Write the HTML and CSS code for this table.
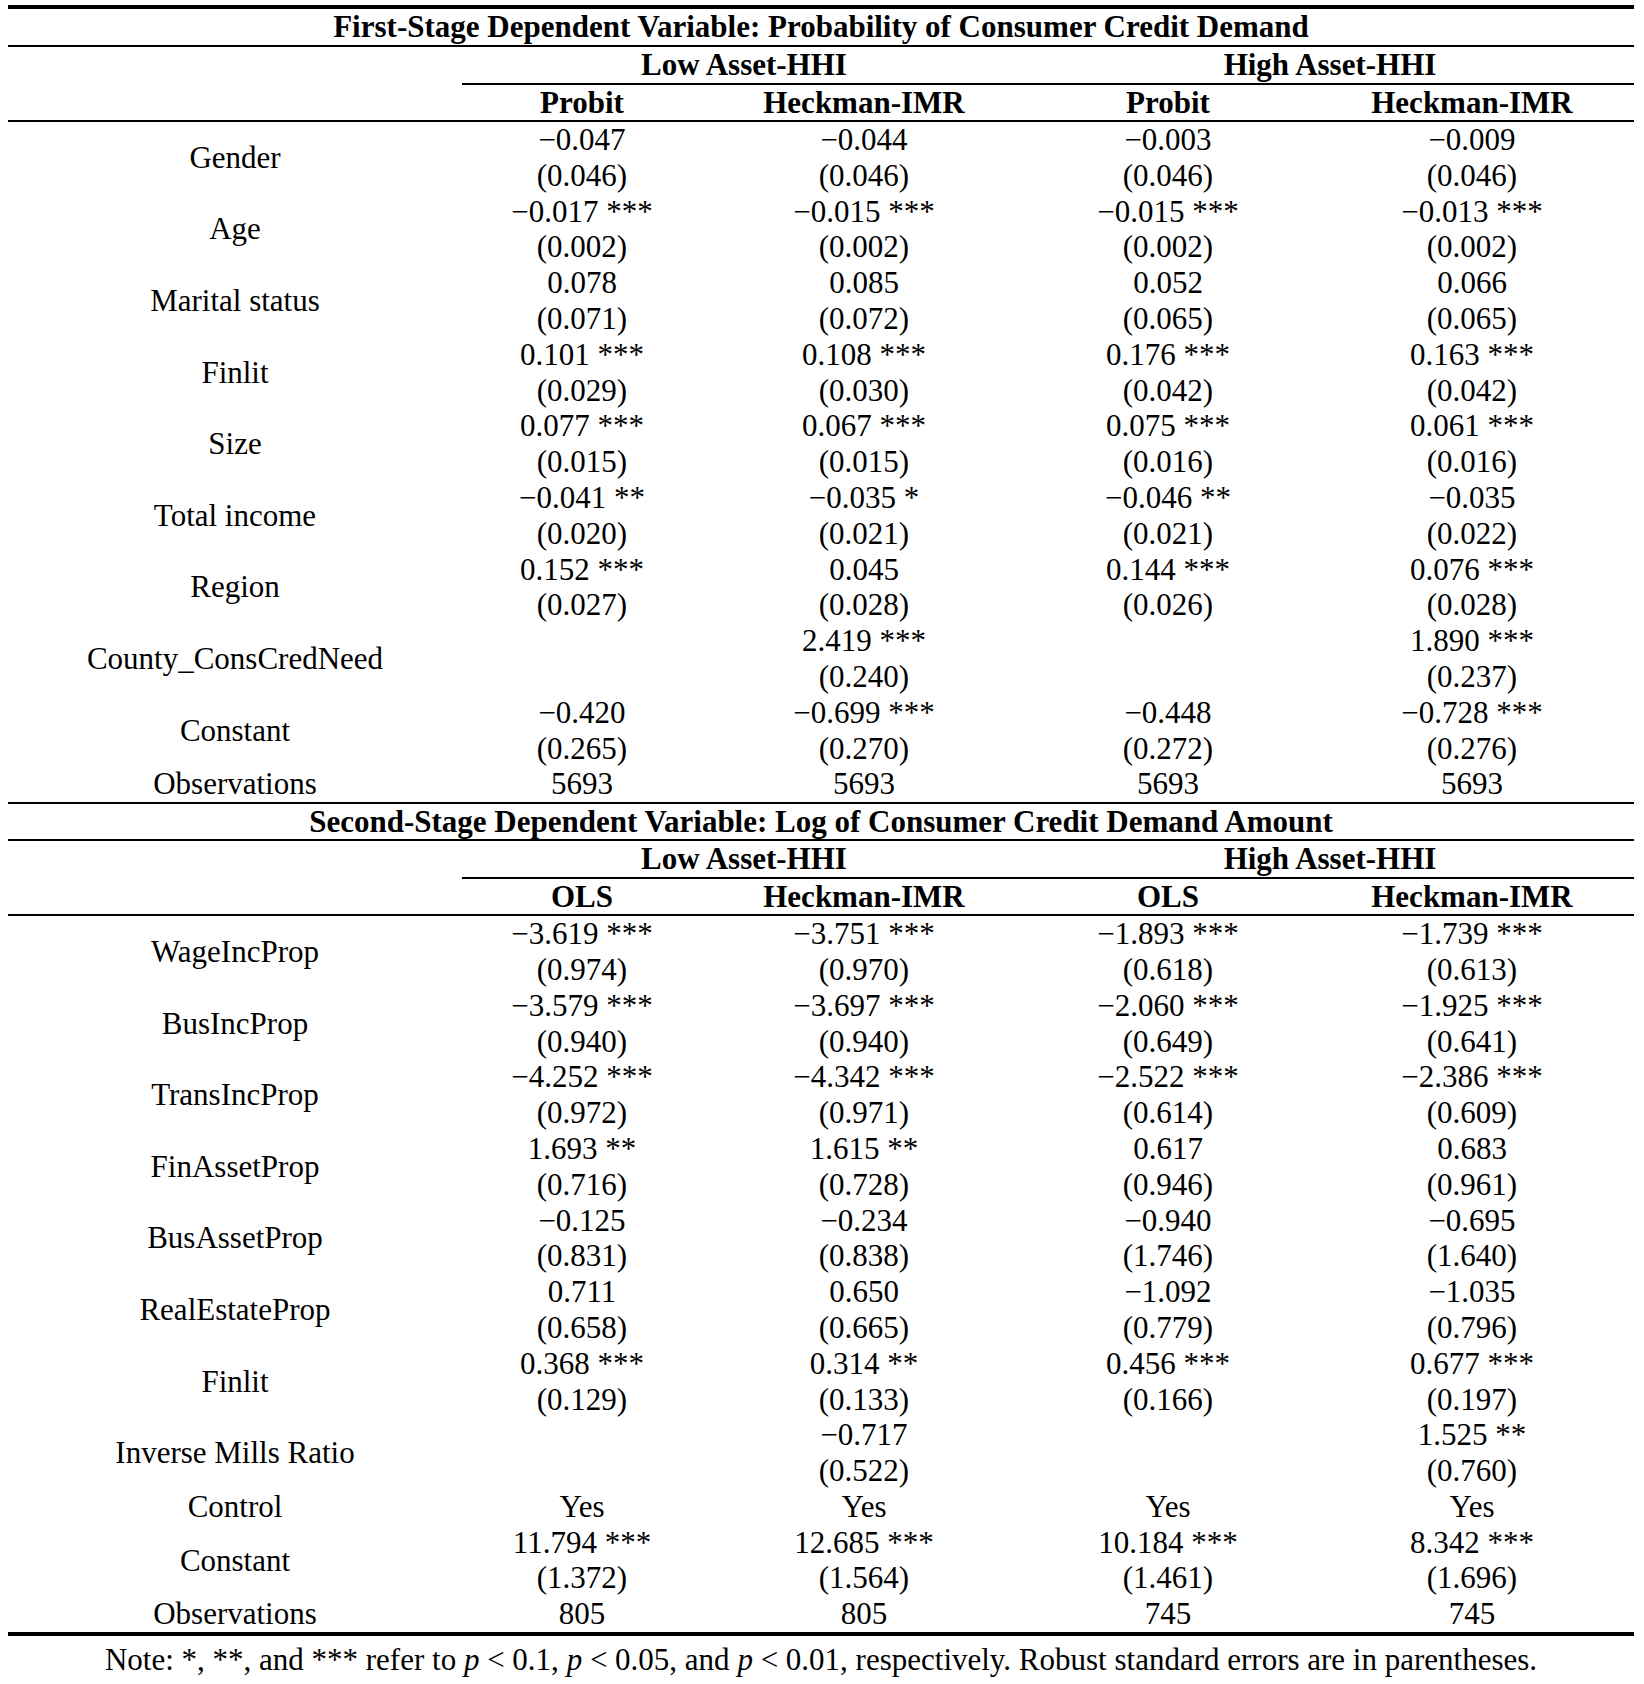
FILE: index.html
```html
<!DOCTYPE html>
<html lang="en">
<head>
<meta charset="utf-8">
<title>Heckman two-stage estimates</title>
<link rel="stylesheet" href="styles.css">
</head>
<body>
<div class="page">
  <div class="tbl">
    <div class="title">First-Stage Dependent Variable: Probability of Consumer Credit Demand</div>
    <div class="head">
      <div></div>
      <div class="groups">
        <div class="group">Low Asset-HHI</div>
        <div class="group">High Asset-HHI</div>
      </div>
    </div>
    <div class="grid sub">
      <div></div><div>Probit</div><div>Heckman-IMR</div><div>Probit</div><div>Heckman-IMR</div>
    </div>
    <div class="body body-1">
      <div class="grid row"><div class="label">Gender</div><div>−0.047<br>(0.046)</div><div>−0.044<br>(0.046)</div><div>−0.003<br>(0.046)</div><div>−0.009<br>(0.046)</div></div>
      <div class="grid row"><div class="label">Age</div><div>−0.017 ***<br>(0.002)</div><div>−0.015 ***<br>(0.002)</div><div>−0.015 ***<br>(0.002)</div><div>−0.013 ***<br>(0.002)</div></div>
      <div class="grid row"><div class="label">Marital status</div><div>0.078<br>(0.071)</div><div>0.085<br>(0.072)</div><div>0.052<br>(0.065)</div><div>0.066<br>(0.065)</div></div>
      <div class="grid row"><div class="label">Finlit</div><div>0.101 ***<br>(0.029)</div><div>0.108 ***<br>(0.030)</div><div>0.176 ***<br>(0.042)</div><div>0.163 ***<br>(0.042)</div></div>
      <div class="grid row"><div class="label">Size</div><div>0.077 ***<br>(0.015)</div><div>0.067 ***<br>(0.015)</div><div>0.075 ***<br>(0.016)</div><div>0.061 ***<br>(0.016)</div></div>
      <div class="grid row"><div class="label">Total income</div><div>−0.041 **<br>(0.020)</div><div>−0.035 *<br>(0.021)</div><div>−0.046 **<br>(0.021)</div><div>−0.035<br>(0.022)</div></div>
      <div class="grid row"><div class="label">Region</div><div>0.152 ***<br>(0.027)</div><div>0.045<br>(0.028)</div><div>0.144 ***<br>(0.026)</div><div>0.076 ***<br>(0.028)</div></div>
      <div class="grid row two"><div class="label">County_ConsCredNeed</div><div></div><div>2.419 ***<br>(0.240)</div><div></div><div>1.890 ***<br>(0.237)</div></div>
      <div class="grid row"><div class="label">Constant</div><div>−0.420<br>(0.265)</div><div>−0.699 ***<br>(0.270)</div><div>−0.448<br>(0.272)</div><div>−0.728 ***<br>(0.276)</div></div>
      <div class="grid row"><div class="label">Observations</div><div>5693</div><div>5693</div><div>5693</div><div>5693</div></div>
    </div>

    <div class="title title-2">Second-Stage Dependent Variable: Log of Consumer Credit Demand Amount</div>
    <div class="head">
      <div></div>
      <div class="groups">
        <div class="group">Low Asset-HHI</div>
        <div class="group">High Asset-HHI</div>
      </div>
    </div>
    <div class="grid sub">
      <div></div><div>OLS</div><div>Heckman-IMR</div><div>OLS</div><div>Heckman-IMR</div>
    </div>
    <div class="body body-2">
      <div class="grid row"><div class="label">WageIncProp</div><div>−3.619 ***<br>(0.974)</div><div>−3.751 ***<br>(0.970)</div><div>−1.893 ***<br>(0.618)</div><div>−1.739 ***<br>(0.613)</div></div>
      <div class="grid row"><div class="label">BusIncProp</div><div>−3.579 ***<br>(0.940)</div><div>−3.697 ***<br>(0.940)</div><div>−2.060 ***<br>(0.649)</div><div>−1.925 ***<br>(0.641)</div></div>
      <div class="grid row"><div class="label">TransIncProp</div><div>−4.252 ***<br>(0.972)</div><div>−4.342 ***<br>(0.971)</div><div>−2.522 ***<br>(0.614)</div><div>−2.386 ***<br>(0.609)</div></div>
      <div class="grid row"><div class="label">FinAssetProp</div><div>1.693 **<br>(0.716)</div><div>1.615 **<br>(0.728)</div><div>0.617<br>(0.946)</div><div>0.683<br>(0.961)</div></div>
      <div class="grid row"><div class="label">BusAssetProp</div><div>−0.125<br>(0.831)</div><div>−0.234<br>(0.838)</div><div>−0.940<br>(1.746)</div><div>−0.695<br>(1.640)</div></div>
      <div class="grid row"><div class="label">RealEstateProp</div><div>0.711<br>(0.658)</div><div>0.650<br>(0.665)</div><div>−1.092<br>(0.779)</div><div>−1.035<br>(0.796)</div></div>
      <div class="grid row"><div class="label">Finlit</div><div>0.368 ***<br>(0.129)</div><div>0.314 **<br>(0.133)</div><div>0.456 ***<br>(0.166)</div><div>0.677 ***<br>(0.197)</div></div>
      <div class="grid row two"><div class="label">Inverse Mills Ratio</div><div></div><div>−0.717<br>(0.522)</div><div></div><div>1.525 **<br>(0.760)</div></div>
      <div class="grid row"><div class="label">Control</div><div>Yes</div><div>Yes</div><div>Yes</div><div>Yes</div></div>
      <div class="grid row"><div class="label">Constant</div><div>11.794 ***<br>(1.372)</div><div>12.685 ***<br>(1.564)</div><div>10.184 ***<br>(1.461)</div><div>8.342 ***<br>(1.696)</div></div>
      <div class="grid row"><div class="label">Observations</div><div>805</div><div>805</div><div>745</div><div>745</div></div>
    </div>
  </div>
  <p class="note">Note: *, **, and *** refer to <i>p</i> &lt; 0.1, <i>p</i> &lt; 0.05, and <i>p</i> &lt; 0.01, respectively. Robust standard errors are in parentheses.</p>
</div>
</body>
</html>
```

FILE: styles.css
```css
html, body {
  margin: 0;
  padding: 0;
  background: #fff;
}

body {
  font-family: "Liberation Serif", "Times New Roman", serif;
  font-size: 31px;
  color: #000;
}

.page {
  width: 1626px;
  margin: 5px 0 0 8px;
}

.tbl {
  border-top: 4px solid #000;
  border-bottom: 4px solid #000;
}

.title {
  height: 36px;
  line-height: 36px;
  text-align: center;
  font-weight: bold;
  border-bottom: 2px solid #000;
}

.title-2 {
  height: 35px;
  line-height: 35px;
}

.head {
  display: grid;
  grid-template-columns: 454px 1172px;
}

.groups {
  display: grid;
  grid-template-columns: 564px 608px;
  border-bottom: 2px solid #000;
}

.group {
  height: 36px;
  line-height: 36px;
  text-align: center;
  font-weight: bold;
}

.grid {
  display: grid;
  grid-template-columns: 454px 240px 324px 284px 324px;
}

.sub {
  border-bottom: 2px solid #000;
}

.sub > div {
  height: 35px;
  line-height: 35px;
  text-align: center;
  font-weight: bold;
}

.row > div {
  text-align: center;
  white-space: nowrap;
}

.row .label {
  display: flex;
  align-items: center;
  justify-content: center;
}

.body-1 {
  line-height: 35.79px;
  border-bottom: 2px solid #000;
}

.body-2 {
  line-height: 35.8px;
}

.two > div:empty {
  min-height: 71px;
}

.note {
  margin: 0;
  padding-top: 6px;
  line-height: 36px;
  text-align: center;
}
```
